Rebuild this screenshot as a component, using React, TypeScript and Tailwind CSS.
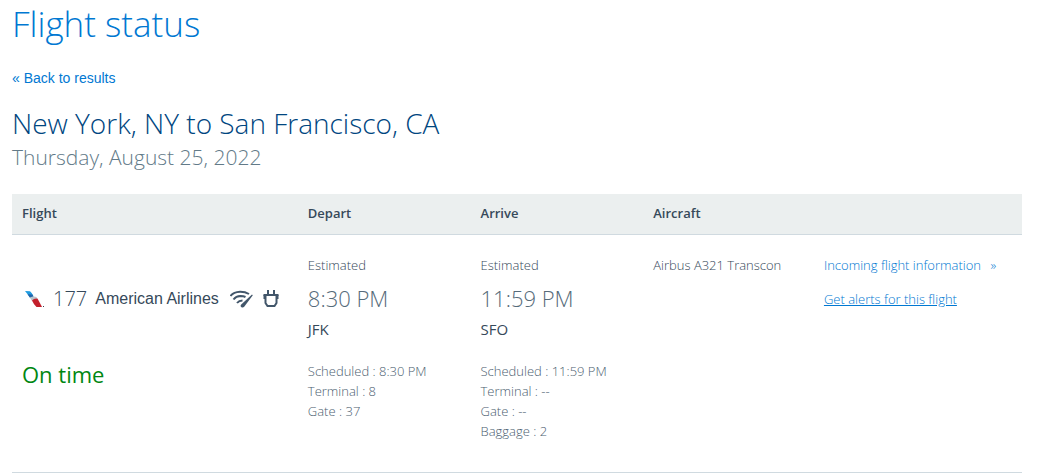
type Leg = {
  time: string;
  airport: string;
  details: string[];
};

const depart: Leg = {
  time: "8:30 PM",
  airport: "JFK",
  details: ["Scheduled : 8:30 PM", "Terminal : 8", "Gate : 37"],
};

const arrive: Leg = {
  time: "11:59 PM",
  airport: "SFO",
  details: ["Scheduled : 11:59 PM", "Terminal : --", "Gate : --", "Baggage : 2"],
};

const AirlineLogo = () => (
  <svg width="20" height="18" viewBox="0 0 20 18" aria-hidden="true">
    <path d="M0 1 L5 1.2 Q7 2.5 8.5 6.5 L5 7.5 Q2.5 4 0 1Z" fill="#1e9be0" />
    <path d="M2.5 4.2 L7.5 4.5 L8.5 6.5 L5 7.8Z" fill="#2464a8" />
    <path d="M5 7.8 Q8 5.5 11.5 7 L12 8.5 L9 10 L7 11Z" fill="#b9c3ca" />
    <path d="M7 10.5 Q9 8 12.5 8.5 L17 17 L11.5 17 Q9 15 7 10.5Z" fill="#c3202c" />
    <rect x="18" y="16" width="1" height="1" fill="#36495a" />
  </svg>
);

const WifiIcon = () => (
  <svg width="23" height="18" viewBox="0 0 23 18" fill="none" stroke="#42566a" role="img" aria-label="Wi-Fi">
    <path d="M0.5 6 Q3.5 2 10 1.7 Q15 1.6 19 4" strokeWidth="2" />
    <path d="M3.5 9.5 Q6 6.2 10.5 6 Q13.5 6 15.5 7" strokeWidth="2" />
    <path d="M7 13 Q9 10.5 12.5 10.5" strokeWidth="2" />
    <path d="M22 4.5 L22.8 5.2 L14.2 16.8 Q12.8 18.2 11.2 17 Q10 15.8 11.2 14.4Z" fill="#42566a" stroke="none" />
  </svg>
);

const PlugIcon = () => (
  <svg width="16" height="18" viewBox="0 0 16 18" fill="none" stroke="#42566a" strokeWidth="2" role="img" aria-label="Power outlet">
    <path d="M5 0 V4 M11 0 V4" />
    <path d="M0.5 5 H15.5" />
    <path d="M1.5 5 V9 M14.5 5 V9" strokeWidth="2" />
    <path d="M2.5 6 V13 L4.5 16 H11.5 L13.5 13 V6" />
  </svg>
);

const LegTimes = ({ leg }: { leg: Leg }) => (
  <td className="px-2.5 pt-5 align-top">
    <p className="leading-5">Estimated</p>
    <p className="mt-[7px] text-[22px] leading-8 text-[#566b7a]">{leg.time}</p>
    <p className="mt-[5px] text-[15px] leading-5 font-normal">{leg.airport}</p>
  </td>
);

const LegDetails = ({ leg }: { leg: Leg }) => (
  <td className="px-2.5 pt-[22px] pb-[31px] align-top text-[#4c6070]">
    {leg.details.map((line) => (
      <p key={line} className="leading-5">{line}</p>
    ))}
  </td>
);

const App = () => {
  return (
    <main className="pt-1 pr-[15px] pl-3 font-['Open_Sans',sans-serif] text-[13px] font-light text-[#36495a]">
      <h1 className="text-[35px] leading-10 text-[#0078d2]">Flight status</h1>
      <a href="#results" className="mt-6 block w-fit font-['Liberation_Sans',Arial,sans-serif] text-sm leading-5 font-normal text-[#0078d2]">
        « Back to results
      </a>
      <h2 className="mt-[15px] text-[28px] leading-10 text-[#00467f]">New York, NY to San Francisco, CA</h2>
      <p className="text-[21px] leading-7 text-[#627a88]">Thursday, August 25, 2022</p>

      <table className="mt-[23px] w-full table-fixed border-collapse text-left">
        <colgroup>
          <col className="w-[28.3%]" />
          <col className="w-[17.1%]" />
          <col className="w-[17.1%]" />
          <col className="w-[16.9%]" />
          <col />
        </colgroup>
        <thead>
          <tr className="h-10 border-b border-[#d0dae0] bg-[#ebefef] text-[13px]">
            <th className="px-2.5 font-semibold">Flight</th>
            <th className="px-2.5 font-semibold">Depart</th>
            <th className="px-2.5 font-semibold">Arrive</th>
            <th className="px-2.5 font-semibold">Aircraft</th>
            <td></td>
          </tr>
        </thead>
        <tbody>
          <tr>
            <td className="px-2.5 pt-12 align-top">
              <div className="flex h-8 items-center pl-[3px] whitespace-nowrap">
                <AirlineLogo />
                <span className="ml-2 text-[20px] leading-8">177</span>
                <span className="ml-2 font-['Liberation_Sans',Arial,sans-serif] text-base font-normal">American Airlines</span>
                <span className="ml-[11px] flex gap-2.5">
                  <WifiIcon />
                  <PlugIcon />
                </span>
              </div>
            </td>
            <LegTimes leg={depart} />
            <LegTimes leg={arrive} />
            <td className="px-2.5 pt-5 align-top leading-5">Airbus A321 Transcon</td>
            <td className="px-2.5 pt-5 align-top whitespace-nowrap text-[#0078d2]">
              <a href="#incoming" className="block w-fit leading-5">
                Incoming flight information <span className="ml-1.5">»</span>
              </a>
              <a href="#alerts" className="mt-3.5 block w-fit leading-5 underline">Get alerts for this flight</a>
            </td>
          </tr>
          <tr className="border-b border-[#d0dae0]">
            <td className="px-2.5 pt-[21px] align-top text-[22px] leading-7 font-normal text-[#008712]">On time</td>
            <LegDetails leg={depart} />
            <LegDetails leg={arrive} />
            <td></td>
            <td></td>
          </tr>
        </tbody>
      </table>
    </main>
  );
};

export default App;
